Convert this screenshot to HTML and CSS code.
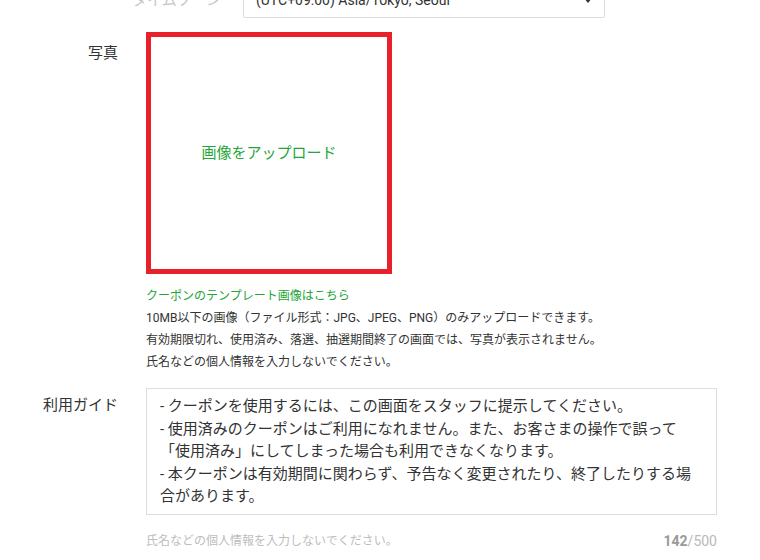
FILE: index.html
```html
<!DOCTYPE html>
<html lang="ja">
<head>
    <meta charset="UTF-8">
    <meta name="viewport" content="width=device-width, initial-scale=1.0">
    <title>クーポン作成</title>
    <link rel="stylesheet" href="styles.css">
</head>
<body>

    <div class="form">
        <div class="row row-tz">
            <div class="label label-muted">タイムゾーン</div>
            <div class="field">
                <div class="select">
                    <span>(UTC+09:00) Asia/Tokyo, Seoul</span>
                    <span class="caret"></span>
                </div>
            </div>
        </div>

        <div class="row row-photo">
            <div class="label">写真</div>
            <div class="field">
                <div class="upload"><span>画像をアップロード</span></div>
                <a class="link" href="#">クーポンのテンプレート画像はこちら</a>
                <p class="note">10MB以下の画像（ファイル形式：JPG、JPEG、PNG）のみアップロードできます。</p>
                <p class="note">有効期限切れ、使用済み、落選、抽選期間終了の画面では、写真が表示されません。</p>
                <p class="note">氏名などの個人情報を入力しないでください。</p>
            </div>
        </div>

        <div class="row row-guide">
            <div class="label">利用ガイド</div>
            <div class="field">
                <div class="textarea">- クーポンを使用するには、この画面をスタッフに提示してください。
- 使用済みのクーポンはご利用になれません。また、お客さまの操作で誤って「使用済み」にしてしまった場合も利用できなくなります。
- 本クーポンは有効期間に関わらず、予告なく変更されたり、終了したりする場合があります。</div>
                <div class="foot">
                    <span class="hint">氏名などの個人情報を入力しないでください。</span>
                    <span class="count"><b>142</b>/500</span>
                </div>
            </div>
        </div>
    </div>

</body>
</html>
```

FILE: styles.css
```css
* { margin: 0; padding: 0; box-sizing: border-box; }
body { background: #fff; color: #333; font-family: Roboto, "Noto Sans CJK JP", sans-serif; overflow: hidden; }
.form { margin-top: -18px; width: 760px; }
.row { display: flex; gap: 28px; }
.label { width: 118px; flex: none; text-align: right; font-size: 15px; line-height: 22px; color: #333; }
.label-muted { color: #c8c8c8; }
.field { flex: none; }

/* timezone */
.row-tz { gap: 22px; }
.row-tz .label { width: 221px; padding-top: 7px; }
.select { width: 362px; height: 36px; border: 1px solid #ddd; border-radius: 2px; padding: 0 12px; display: flex; align-items: center; justify-content: space-between; font-size: 14px; color: #333; }
.caret { width: 0; height: 0; border-left: 4px solid transparent; border-right: 4px solid transparent; border-top: 5px solid #333; }

/* photo */
.row-photo { margin-top: 14px; }
.row-photo .label { padding-top: 10px; }
.upload { width: 246px; height: 242px; border: 5px solid #e8202a; padding-bottom: 3px; display: flex; align-items: center; justify-content: center; font-size: 15px; color: #24a537; }
.link { display: block; margin-top: 11px; font-size: 12px; line-height: 22px; color: #24a537; text-decoration: none; }
.note { font-size: 12px; line-height: 22px; color: #333; white-space: nowrap; }

/* guide */
.row-guide { margin-top: 15px; }
.row-guide .label { padding-top: 6px; }
.textarea { width: 571px; border: 1px solid #ddd; padding: 6px 13px; font-size: 15px; line-height: 22.5px; color: #333; white-space: pre-line; }
.foot { display: flex; justify-content: space-between; margin-top: 15px; font-size: 12px; line-height: 22px; }
.hint { color: #bdbdbd; }
.count { color: #b8b8b8; font-size: 14px; }
.count b { color: #999; }
```
